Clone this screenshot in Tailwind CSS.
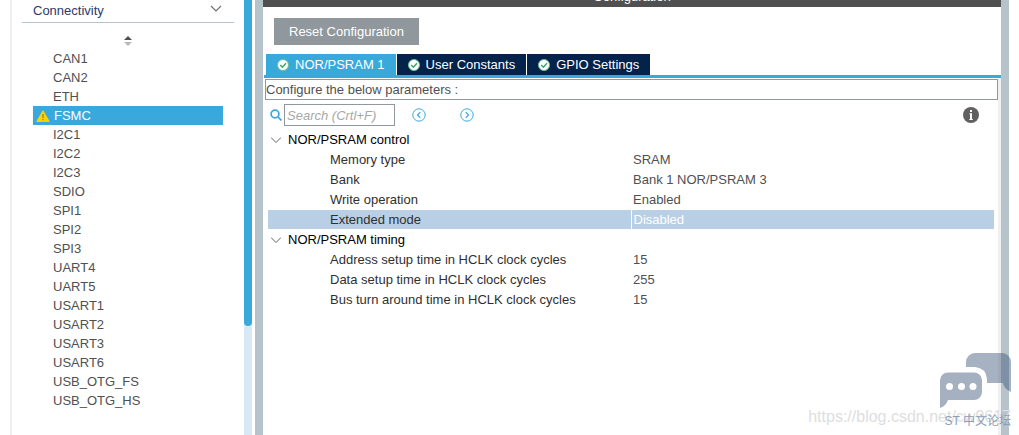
<!DOCTYPE html>
<html lang="en">
<head>
  <meta charset="UTF-8">
  <title>FSMC Configuration</title>
  <script src="https://cdn.jsdelivr.net/npm/@tailwindcss/browser@4"></script>
</head>
<body class="relative flex h-screen overflow-hidden bg-white font-['Liberation_Sans','Noto_Sans_CJK_SC',sans-serif] text-[13px] leading-5 text-[#505050]">

  <!-- Peripheral list -->
  <aside class="ml-2.5 flex w-[242px] shrink-0 border-l-2 border-[#f0f0f0]">
    <div class="flex-1 px-2.5">
      <button class="flex h-[23px] w-full items-center justify-between border-b border-[#b8c4cc] pr-3 pl-[11px] text-[#2b3a67]">
        Connectivity
        <svg class="mb-1 h-3 w-3" viewBox="0 0 12 12" fill="none" stroke="#707070" stroke-width="1.2"><path d="M1 3l5 5 5-5"/></svg>
      </button>
      <div class="flex h-[26px] items-end justify-center pb-[3px]">
        <svg class="h-2.5 w-2" viewBox="0 0 8 10"><path d="M0 4l4-4 4 4z" fill="#505050"/><path d="M0 6h8l-4 4z" fill="#b8b8b8"/></svg>
      </div>
      <ul class="mx-[11px] leading-[19px]">
        <li class="pl-5">CAN1</li>
        <li class="pl-5">CAN2</li>
        <li class="pl-5">ETH</li>
        <li class="flex items-center gap-1 bg-[#39a9dc] pl-[3px] text-white">
          <svg class="h-3 w-3.5" viewBox="0 0 14 12"><path d="M7 .8l6.200 10.600H.8z" fill="#ffd200" stroke="#ffd200" stroke-linejoin="round"/><path d="M7 4v4M7 9v1.200" stroke="#8a7d3a" stroke-width="1.200"/></svg>
          FSMC
        </li>
        <li class="pl-5">I2C1</li>
        <li class="pl-5">I2C2</li>
        <li class="pl-5">I2C3</li>
        <li class="pl-5">SDIO</li>
        <li class="pl-5">SPI1</li>
        <li class="pl-5">SPI2</li>
        <li class="pl-5">SPI3</li>
        <li class="pl-5">UART4</li>
        <li class="pl-5">UART5</li>
        <li class="pl-5">USART1</li>
        <li class="pl-5">USART2</li>
        <li class="pl-5">USART3</li>
        <li class="pl-5">USART6</li>
        <li class="pl-5">USB_OTG_FS</li>
        <li class="pl-5">USB_OTG_HS</li>
      </ul>
    </div>
    <div class="w-2 bg-[#d8e8f5]">
      <div class="h-3/4 rounded-b bg-[#39a9dc]"></div>
    </div>
  </aside>

  <div class="ml-[3px] w-2 shrink-0 bg-[#b7c3ca]"></div>

  <!-- Configuration panel -->
  <main class="flex min-w-0 flex-1 flex-col">
    <header class="flex h-[7px] shrink-0 items-end justify-center overflow-hidden bg-[#505050] text-white">
      <h1>Configuration</h1>
    </header>

    <div class="px-[11px] pt-[11px] pb-[9px]">
      <button class="h-[27px] bg-[#90979d] px-[15px] text-white">Reset Configuration</button>
    </div>

    <nav class="ml-px flex gap-px border-b-3 border-[#39a9dc] pl-0.5 text-white">
      <button class="flex h-[21px] items-center gap-1.5 bg-[#39a9dc] px-[11px]">
        <svg class="h-3 w-3" viewBox="0 0 12 12"><circle cx="6" cy="6" r="5.500" fill="#fff" stroke="#6cc191"/><path d="M3.200 6l2.200 2.200 3.600-3.900" fill="none" stroke="#3aa76d" stroke-width="1.500"/></svg>
        NOR/PSRAM 1
      </button>
      <button class="flex h-[21px] items-center gap-1.5 bg-[#03234b] px-[11px]">
        <svg class="h-3 w-3" viewBox="0 0 12 12"><circle cx="6" cy="6" r="5.500" fill="#fff" stroke="#6cc191"/><path d="M3.200 6l2.200 2.200 3.600-3.900" fill="none" stroke="#3aa76d" stroke-width="1.500"/></svg>
        User Constants
      </button>
      <button class="flex h-[21px] items-center gap-1.5 bg-[#03234b] px-[11px]">
        <svg class="h-3 w-3" viewBox="0 0 12 12"><circle cx="6" cy="6" r="5.500" fill="#fff" stroke="#6cc191"/><path d="M3.200 6l2.200 2.200 3.600-3.900" fill="none" stroke="#3aa76d" stroke-width="1.500"/></svg>
        GPIO Settings
      </button>
    </nav>

    <div class="flex-1 border-r-3 border-[#f0f0f0] pl-0.5">
      <p class="mt-px h-[21px] border border-[#90979d] leading-[19px]">Configure the below parameters :</p>

      <div class="flex h-[30px] items-center pr-[19px] pl-[5px]">
        <label for="search" class="mr-0.5">
          <svg class="h-3 w-3" viewBox="0 0 12 12" fill="none" stroke="#39a9dc" stroke-width="1.700"><circle cx="5" cy="5" r="3.900"/><path d="M8 8l3.500 3.500"/></svg>
        </label>
        <input id="search" type="text" aria-label="Search" placeholder="Search (Crtl+F)" class="h-[22px] w-[111px] border border-[#90979d] px-0.5 italic placeholder:text-[#a8a8a8]">
        <button aria-label="Previous" class="ml-[17px]">
          <svg class="h-3.5 w-3.5" viewBox="0 0 14 14" fill="none" stroke="#39a9dc"><circle cx="7" cy="7" r="6.200"/><path d="M8.300 4.200L5.500 7l2.800 2.800" stroke-width="1.200"/></svg>
        </button>
        <button aria-label="Next" class="ml-[34px]">
          <svg class="h-3.5 w-3.5" viewBox="0 0 14 14" fill="none" stroke="#39a9dc"><circle cx="7" cy="7" r="6.200"/><path d="M5.700 4.200L8.500 7 5.700 9.800" stroke-width="1.200"/></svg>
        </button>
        <button aria-label="Information" class="ml-auto">
          <svg class="h-4 w-4" viewBox="0 0 16 16"><circle cx="8" cy="8" r="8" fill="#606060"/><path d="M7 3h2v2H7zM6.500 6.300H9V12h.8v1H6.300v-1H7V7.200h-.5z" fill="#fff"/></svg>
        </button>
      </div>

      <div class="pr-1 pl-[3px]">
        <table class="w-full table-fixed">
          <tbody>
            <tr class="h-5 text-black">
              <th colspan="2" scope="rowgroup" class="text-left font-normal">
                <span class="flex items-center gap-[7px] pl-[3px]">
                  <svg class="h-2.5 w-2.5" viewBox="0 0 10 10" fill="none" stroke="#606060"><path d="M0 2.500l5 5 5-5"/></svg>
                  NOR/PSRAM control
                </span>
              </th>
            </tr>
            <tr class="h-5"><td class="pl-[62px] text-[#303030]">Memory type</td><td class="pl-0.5">SRAM</td></tr>
            <tr class="h-5"><td class="pl-[62px] text-[#303030]">Bank</td><td class="pl-0.5">Bank 1 NOR/PSRAM 3</td></tr>
            <tr class="h-5"><td class="pl-[62px] text-[#303030]">Write operation</td><td class="pl-0.5">Enabled</td></tr>
            <tr class="h-[19px] border-b border-white bg-[#b8cfe5] leading-[19px]"><td class="border-r border-white pl-[62px] text-[#303030]">Extended mode</td><td class="pl-0.5 text-white">Disabled</td></tr>
            <tr class="h-5 text-black">
              <th colspan="2" scope="rowgroup" class="text-left font-normal">
                <span class="flex items-center gap-[7px] pl-[3px]">
                  <svg class="h-2.5 w-2.5" viewBox="0 0 10 10" fill="none" stroke="#606060"><path d="M0 2.500l5 5 5-5"/></svg>
                  NOR/PSRAM timing
                </span>
              </th>
            </tr>
            <tr class="h-5"><td class="pl-[62px] text-[#303030]">Address setup time in HCLK clock cycles</td><td class="pl-0.5">15</td></tr>
            <tr class="h-5"><td class="pl-[62px] text-[#303030]">Data setup time in HCLK clock cycles</td><td class="pl-0.5">255</td></tr>
            <tr class="h-5"><td class="pl-[62px] text-[#303030]">Bus turn around time in HCLK clock cycles</td><td class="pl-0.5">15</td></tr>
          </tbody>
        </table>
      </div>
    </div>
  </main>

  <div class="mr-2.5 w-2 shrink-0 bg-[#b7c3ca]"></div>

  <!-- Watermarks -->
  <div class="absolute right-2 bottom-1.5 text-base text-[#dedede]">https://blog.csdn.net/cw9617</div>
  <div class="absolute right-2 bottom-1.5 flex flex-col items-end text-xs text-[#8d9db5]">
    <svg class="mb-1 h-14 w-[71px]" viewBox="0 0 71 56">
      <path d="M26 14V9a9 9 0 0 1 9-9h27a9 9 0 0 1 9 9v30q-7-3-8-9H47v-4q-1-11-12-12z" fill="#3a5275" fill-opacity=".45"/>
      <path d="M8 19.500h26a8 8 0 0 1 8 8V39a8 8 0 0 1-8 8H8q-2 6-8 8V27.500a8 8 0 0 1 8-8z" fill="#a5b1c1"/>
      <circle cx="9.500" cy="33.500" r="3.500" fill="#fff"/><circle cx="21.500" cy="33.500" r="3.500" fill="#fff"/><circle cx="33" cy="33.500" r="3.500" fill="#fff"/>
    </svg>
    <span>ST 中文论坛</span>
  </div>

</body>
</html>
